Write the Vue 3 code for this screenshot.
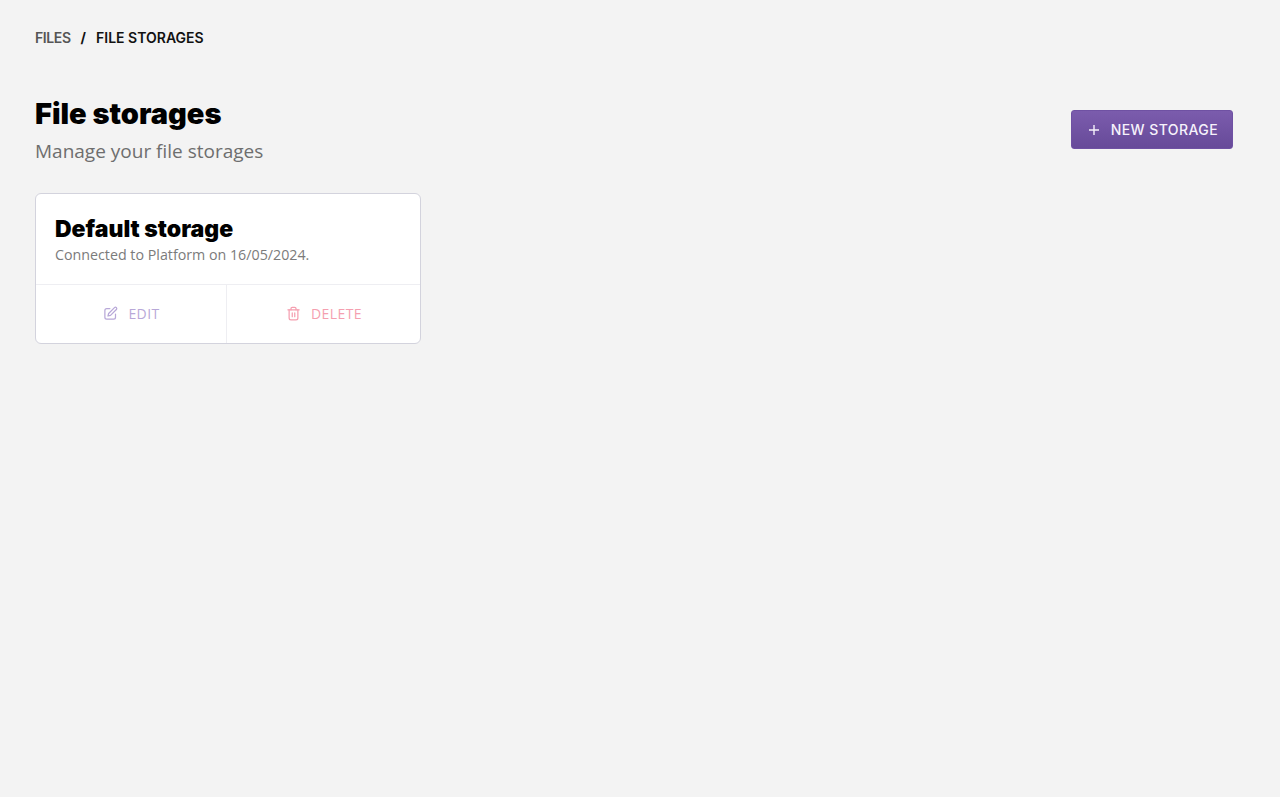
<template>
  <div class="page">
    <nav class="crumbs">
      <a class="crumb">FILES</a>
      <span class="sep">/</span>
      <span class="crumb current">FILE STORAGES</span>
    </nav>

    <header class="page-head">
      <div>
        <h1>File storages</h1>
        <p class="subtitle">Manage your file storages</p>
      </div>
      <button class="new-btn">
        <svg width="12" height="12" viewBox="0 0 12 12" fill="none" stroke="currentColor" stroke-width="1.4">
          <path d="M6 1v10M1 6h10" />
        </svg>
        NEW STORAGE
      </button>
    </header>

    <div class="cards">
      <article v-for="item in storages" :key="item.name" class="card">
        <div class="card-body">
          <h2>{{ item.name }}</h2>
          <p>Connected to {{ item.host }} on {{ item.date }}.</p>
        </div>
        <div class="card-actions">
          <button class="action edit">
            <svg width="15" height="15" viewBox="0 0 24 24" fill="none" stroke="currentColor" stroke-width="2" stroke-linecap="round" stroke-linejoin="round">
              <path d="M11 4H6a3 3 0 0 0-3 3v11a3 3 0 0 0 3 3h11a3 3 0 0 0 3-3v-5" />
              <path d="M18.4 2.6a2.1 2.1 0 0 1 3 3L12 15l-4 1 1-4z" />
            </svg>
            EDIT
          </button>
          <button class="action delete">
            <svg width="15" height="15" viewBox="0 0 24 24" fill="none" stroke="currentColor" stroke-width="2" stroke-linecap="round" stroke-linejoin="round">
              <path d="M3 6h18" />
              <path d="M8 6V4a2 2 0 0 1 2-2h4a2 2 0 0 1 2 2v2" />
              <path d="M19 6v13a3 3 0 0 1-3 3H8a3 3 0 0 1-3-3V6" />
              <path d="M10 11v6M14 11v6" />
            </svg>
            DELETE
          </button>
        </div>
      </article>
    </div>
  </div>
</template>

<script setup>
const storages = [
  { name: 'Default storage', host: 'Platform', date: '16/05/2024' }
];
</script>

<style>
html, body {
  margin: 0;
  background: #f3f3f3;
}
</style>

<style scoped>
.page {
  min-height: 797px;
  box-sizing: border-box;
  padding: 28px 47px 0 35px;
  background: #f3f3f3;
  font-family: "Open Sans", sans-serif;
}

.crumbs {
  display: flex;
  align-items: center;
  gap: 10px;
  height: 18px;
  font-family: Inter, sans-serif;
  font-size: 14px;
  font-weight: 600;
}

.crumb { color: #555; letter-spacing: -0.4px; }
.crumb.current { color: #111; letter-spacing: 0; }
.sep { color: #111; font-weight: 700; }

.page-head {
  display: flex;
  justify-content: space-between;
  align-items: center;
  margin-top: 47px;
}

h1 {
  margin: 0;
  font-family: Inter, sans-serif;
  font-size: 29px;
  line-height: 42px;
  font-weight: 900;
  color: #000;
}

.subtitle {
  margin: 2px 0 0;
  font-size: 19px;
  line-height: 28px;
  color: #6e6e6e;
}

.new-btn {
  display: flex;
  align-items: center;
  gap: 11px;
  height: 39px;
  margin-top: 1px;
  padding: 0 14px 0 16px;
  border: 1px solid #6f51a3;
  border-radius: 3px;
  background: linear-gradient(#7b5cad, #674a99);
  color: #f6f2fb;
  font-family: Inter, sans-serif;
  font-size: 14px;
  font-weight: 500;
  letter-spacing: 0.42px;
}

.cards {
  display: grid;
  grid-template-columns: 386px;
  margin-top: 28px;
}

.card {
  box-sizing: border-box;
  height: 151px;
  display: flex;
  flex-direction: column;
  background: #fff;
  border: 1px solid #d3d3dd;
  border-radius: 6px;
  overflow: hidden;
}

.card-body {
  box-sizing: border-box;
  height: 91px;
  padding: 18px 19px 0;
  border-bottom: 1px solid #eeeef2;
}

h2 {
  margin: 0;
  font-family: Inter, sans-serif;
  font-size: 23px;
  line-height: 34px;
  font-weight: 900;
  color: #000;
}

.card-body p {
  margin: -1px 0 0;
  font-size: 14.25px;
  line-height: 20px;
  color: #7b7b7b;
}

.card-actions {
  flex: 1;
  display: grid;
  grid-template-columns: 191px 1fr;
}

.action {
  display: flex;
  align-items: center;
  justify-content: center;
  gap: 10px;
  border: 0;
  padding: 0 0 2px 1px;
  background: none;
  font-family: "Open Sans", sans-serif;
  font-size: 14px;
  letter-spacing: 0.4px;
}

.action.edit {
  color: #b8a8d8;
  border-right: 1px solid #eeeef2;
}

.action.delete { color: #f59fb0; }
</style>
